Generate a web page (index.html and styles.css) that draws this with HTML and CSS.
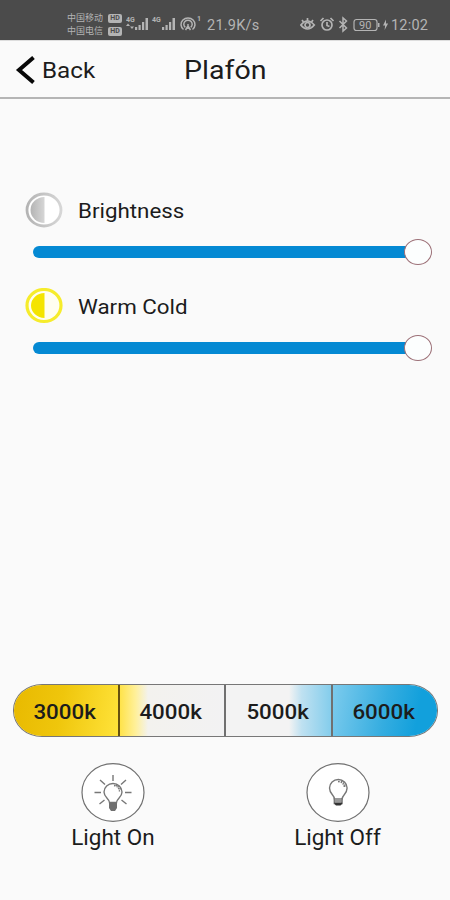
FILE: index.html
```html
<!DOCTYPE html>
<html lang="en">
<head>
<meta charset="utf-8">
<title>Plafón</title>
<link rel="stylesheet" href="styles.css">
</head>
<body>
<div class="status">
  <div class="carriers">
    <div class="carrier"><span>中国移动</span><b>HD</b></div>
    <div class="carrier"><span>中国电信</span><b>HD</b></div>
  </div>
  <svg class="signals" width="76" height="20" viewBox="0 0 76 20">
    <g fill="#b4b4b4">
      <path d="M9 13h2.200v3H9zM12.500 11h2.200v5h-2.200zM16 8h2.200v8H16zM19.500 4h2.500v12h-2.500z"/>
      <path d="M36 13h2.200v3H36zM39.500 11h2.200v5h-2.200zM43 8h2.200v8H43zM46.500 4H49v12h-2.500z"/>
      <path d="M2 9.500l2 2.500H0zM6 15l-2-2.500h4z"/>
    </g>
    <text class="tiny" x="0" y="8">4G</text>
    <text class="tiny" x="26" y="8">4G</text>
    <g fill="none" stroke="#b4b4b4" stroke-width="1.500">
      <path d="M57.500 15.500a7 6.500 0 1 1 9 0M59.300 13.300a4.200 4 0 1 1 5.400 0"/>
      <path d="M62 10v5M59.500 16l2.500-4 2.500 4"/>
    </g>
    <text class="tiny" x="71" y="7">1</text>
  </svg>
  <span class="speed">21.9K/s</span>
  <svg class="indicators" width="90" height="18" viewBox="0 0 90 18">
    <g fill="none" stroke="#b4b4b4" stroke-width="1.700">
      <path d="M.8 10q6.500-8 13.500 0q-7 8-13.500 0z"/>
      <circle cx="7.500" cy="10" r="2.500"/>
      <path d="M2 5l1.500 2M7.500 3v3M13 5l-1.500 2"/>
      <circle cx="27" cy="10" r="5"/>
      <path d="M20.500 6l3-3M33.500 6l-3-3M27 7v3.500l2.500 1"/>
      <path d="M39.500 6l7 7-3.500 3V3l3.500 3-7 7" stroke-width="1.500"/>
      <rect x="54" y="4.500" width="23" height="11" rx="2.500" stroke-width="1.200"/>
    </g>
    <path fill="#b4b4b4" d="M78 8h1.500v4H78zM86 4.500l-3 6h2.100l-.5 4.500 3.500-6.500H86z"/>
    <text class="battery" x="59" y="13.700">90</text>
  </svg>
  <span class="clock">12:02</span>
</div>

<header class="bar">
  <a class="back">
    <svg width="20" height="32" viewBox="0 0 20 32"><path d="M18.500 3.500L4 16l14.500 12.500" fill="none" stroke="#080808" stroke-width="4"/></svg>
    <span class="wide">Back</span>
  </a>
  <h1><span class="wide">Plafón</span></h1>
</header>

<main>
  <section class="control">
    <div class="label">
      <svg width="38" height="36" viewBox="0 0 38 36">
        <defs><linearGradient id="silver"><stop offset="0" stop-color="#b4b4b4"/><stop offset="1" stop-color="#d6d6d6"/></linearGradient></defs>
        <ellipse cx="19" cy="18" rx="17" ry="16" fill="#fff" stroke="url(#silver)" stroke-width="2.800"/>
        <path d="M19.500 5A14 13 0 0 0 19.500 31z" fill="url(#silver)"/>
      </svg>
      <span class="wide">Brightness</span>
    </div>
    <div class="slider"><div class="track"></div><div class="thumb"></div></div>
  </section>
  <section class="control">
    <div class="label">
      <svg width="38" height="36" viewBox="0 0 38 36">
        <ellipse cx="19" cy="17.500" rx="17" ry="16" fill="#fffef0" stroke="#f6ec2c" stroke-width="3.200"/>
        <path d="M19.500 5A13.500 12.500 0 0 0 19.500 30z" fill="#f4e400"/>
      </svg>
      <span class="wide">Warm Cold</span>
    </div>
    <div class="slider"><div class="track"></div><div class="thumb"></div></div>
  </section>
</main>

<div class="temps">
  <div class="temp warm"><span>3000k</span></div>
  <div class="temp soft"><span>4000k</span></div>
  <div class="temp cool"><span>5000k</span></div>
  <div class="temp cold"><span>6000k</span></div>
</div>

<footer class="actions">
  <div class="action">
    <svg width="64" height="60" viewBox="0 0 64 60" fill="none">
      <ellipse cx="32" cy="29.500" rx="31" ry="28.800" fill="#fff" stroke="#707070" stroke-width="1.200"/>
      <g stroke="#777" stroke-width="1.400">
        <path d="M32 12v6M19 17l5 4.500M45 17l-5 4.500M13.500 29.500h6.500M44 29.500h6.500M18.500 41l5-4M45.500 41l-5-4"/>
        <path d="M28.500 39.500c0-4-5.500-5-5.500-10.500a9 8.500 0 0 1 18 0c0 5.500-5.500 6.500-5.500 10.500z"/>
        <path d="M33 22.500q5 1 5.500 6M35 22q4 1.500 4.500 5" stroke-dasharray="1.500 1"/>
      </g>
      <path fill="#707070" d="M28 39.500h8V45l-2 3h-4l-2-3z"/>
    </svg>
    <span class="wide">Light On</span>
  </div>
  <div class="action">
    <svg width="64" height="60" viewBox="0 0 64 60" fill="none">
      <ellipse cx="32" cy="29.500" rx="31" ry="28.800" fill="#fff" stroke="#707070" stroke-width="1.200"/>
      <g stroke="#777" stroke-width="1.400">
        <path d="M28.500 36c0-4-5-5-5-11a8.800 8.500 0 0 1 17.600 0c0 6-5 7-5 11z"/>
        <path d="M32 18.500q6 .5 6.500 6.500M35 18q4 2 4.500 6" stroke-dasharray="1.500 1"/>
        <path d="M28.300 35v5.500h7.800V35M28.300 38h7.800"/>
      </g>
      <path fill="#333" d="M28.500 39.500h7.500v1.500l-1.500 1.500h-4.500l-1.500-1.500z"/>
    </svg>
    <span class="wide">Light Off</span>
  </div>
</footer>
</body>
</html>
```

FILE: styles.css
```css
* { box-sizing: border-box; }
body {
  margin: 0;
  width: 450px;
  height: 900px;
  overflow: hidden;
  display: flex;
  flex-direction: column;
  background: #fafafa;
  color: #1c1c1c;
  font-family: Roboto, "Noto Sans CJK SC", sans-serif;
}
.wide { display: inline-block; transform: scaleX(1.1); transform-origin: left center; white-space: nowrap; }

.status {
  height: 40px;
  flex: none;
  display: flex;
  align-items: center;
  background: #4b4b4b;
  color: #b4b4b4;
  padding: 10px 0 0 67px;
}
.carriers { width: 59px; flex: none; }
.carrier { height: 13px; display: flex; align-items: center; gap: 5px; font-size: 9px; line-height: 13px; }
.carrier b {
  width: 14px;
  height: 9px;
  border-radius: 2px;
  background: #b4b4b4;
  color: #4b4b4b;
  font-size: 7px;
  line-height: 9px;
  text-align: center;
}
.signals { flex: none; margin-top: -2px; }
.tiny { fill: #b4b4b4; font-size: 7px; font-weight: 700; }
.speed { width: 98px; flex: none; padding-left: 5px; font-size: 14.500px; letter-spacing: .25px; }
.indicators { flex: none; margin-top: -3px; }
.battery { fill: #b4b4b4; font-size: 11px; }
.clock { font-size: 14.500px; letter-spacing: .2px; padding-left: 1px; }

.bar {
  height: 59px;
  flex: none;
  display: grid;
  grid-template-columns: 184px 1fr;
  align-items: center;
  padding-top: 2px;
  border-top: 1px solid #ddd;
  border-bottom: 2px solid #b5b5b5;
}
.back { display: flex; align-items: center; gap: 7px; padding-left: 15px; font-size: 22px; }
h1 { margin: 0; font-size: 26px; font-weight: 400; }

main { flex: none; height: 585px; padding: 93px 18px 0 25px; }
.control { height: 96px; }
.label { display: flex; align-items: center; gap: 15px; height: 36px; font-size: 20.500px; }
.label .wide { padding-top: 2px; transform: scaleX(1.09); }
.slider { display: flex; align-items: center; height: 26px; margin-top: 11px; padding-left: 8px; }
.track { flex: 1; height: 12px; border-radius: 6px 0 0 6px; background: #0489d3; }
.thumb { width: 28px; height: 26px; margin-left: -2px; border: 1.500px solid #9c7077; border-radius: 50%; background: #fcfefe; }

.temps {
  flex: none;
  display: grid;
  grid-template-columns: 106px 106px 107px 1fr;
  width: 425px;
  height: 53px;
  margin-left: 13px;
  border: 1px solid #777;
  border-radius: 29px / 26px;
  overflow: hidden;
}
.temp { display: flex; align-items: center; justify-content: center; padding: 2px 2px 0 0; border-right: 2px solid #707070; font-size: 20.500px; font-weight: 500; }
.temp:last-child { border-right: 0; }
.temp span { transform: scaleX(1.09); }
.warm { background: linear-gradient(100deg, #e8b900, #efc60c 45%, #ffe33a); border-color: #66510f; }
.soft { background: linear-gradient(90deg, #ffe34a, #fff09a 15%, #f3f2ee 27%, #f2f2f3); }
.cool { background: linear-gradient(90deg, #f3f3f3 60%, #bfe1f1 72%, #84cdec); }
.cold { background: linear-gradient(100deg, #7ccbed, #35ade0 50%, #12a0dc 80%); }

.actions { display: grid; grid-template-columns: 1fr 1fr; padding-top: 26px; }
.action { display: flex; flex-direction: column; align-items: center; font-size: 21.500px; line-height: 30px; }
.action .wide { transform: scaleX(1.045); transform-origin: center; }
```
